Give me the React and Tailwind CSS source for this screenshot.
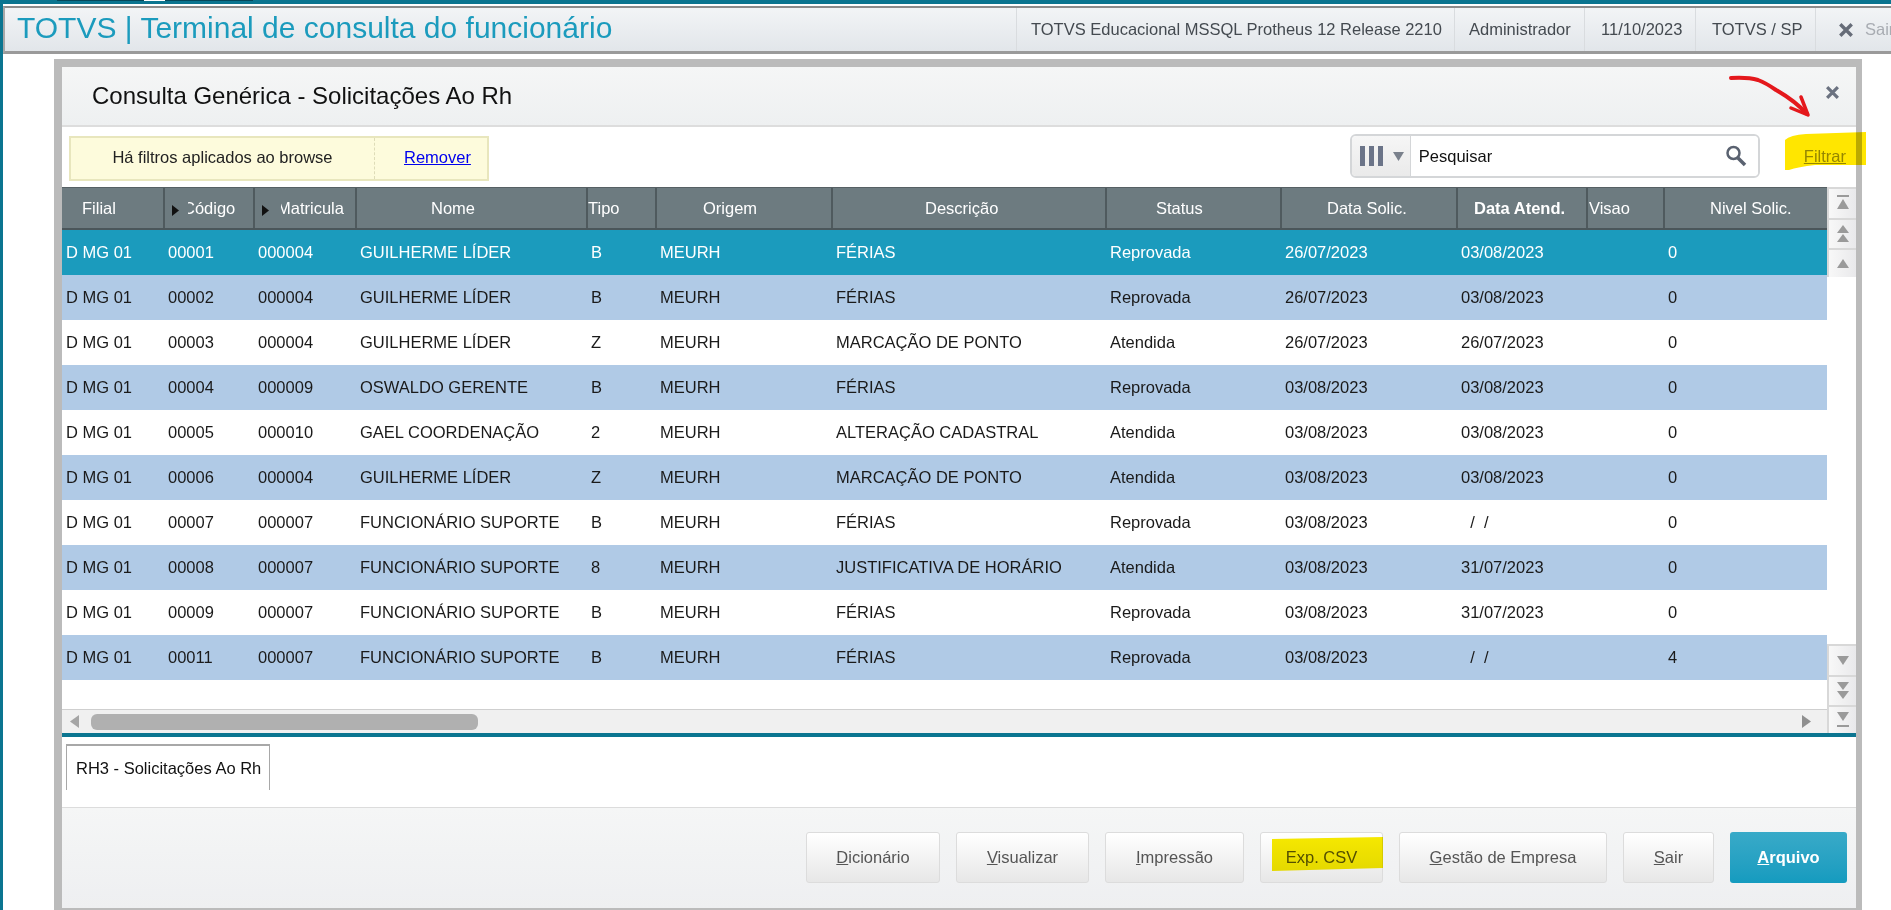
import React from 'react';

const gridCols = 'grid grid-cols-[101px_90px_102px_231px_69px_176px_274px_175px_176px_130px_77px_164px]';

const columns = [
  { label: 'Filial', cls: 'pl-[20px]' },
  { label: 'Código', cls: 'pl-[18px]', marker: 'w-[23px]' },
  { label: 'Matricula', cls: 'pl-[22px]', marker: 'w-[26px]' },
  { label: 'Nome', cls: 'pl-[74px]' },
  { label: 'Tipo', cls: 'pl-0' },
  { label: 'Origem', cls: 'pl-[46px]' },
  { label: 'Descrição', cls: 'pl-[92px]' },
  { label: 'Status', cls: 'pl-[49px]' },
  { label: 'Data Solic.', cls: 'pl-[45px]' },
  { label: 'Data Atend.', cls: 'pl-[16px] font-bold' },
  { label: 'Visao', cls: 'pl-[1px]' },
  { label: 'Nivel Solic.', cls: 'pl-[45px]' },
];

const GL = 'GUILHERME LÍDER';
const FS = 'FUNCIONÁRIO SUPORTE';
const rows = [
  ['00001', '000004', GL, 'B', 'FÉRIAS', 'Reprovada', '26/07/2023', '03/08/2023', '0'],
  ['00002', '000004', GL, 'B', 'FÉRIAS', 'Reprovada', '26/07/2023', '03/08/2023', '0'],
  ['00003', '000004', GL, 'Z', 'MARCAÇÃO DE PONTO', 'Atendida', '26/07/2023', '26/07/2023', '0'],
  ['00004', '000009', 'OSWALDO GERENTE', 'B', 'FÉRIAS', 'Reprovada', '03/08/2023', '03/08/2023', '0'],
  ['00005', '000010', 'GAEL COORDENAÇÃO', '2', 'ALTERAÇÃO CADASTRAL', 'Atendida', '03/08/2023', '03/08/2023', '0'],
  ['00006', '000004', GL, 'Z', 'MARCAÇÃO DE PONTO', 'Atendida', '03/08/2023', '03/08/2023', '0'],
  ['00007', '000007', FS, 'B', 'FÉRIAS', 'Reprovada', '03/08/2023', '  /  /', '0'],
  ['00008', '000007', FS, '8', 'JUSTIFICATIVA DE HORÁRIO', 'Atendida', '03/08/2023', '31/07/2023', '0'],
  ['00009', '000007', FS, 'B', 'FÉRIAS', 'Reprovada', '03/08/2023', '31/07/2023', '0'],
  ['00011', '000007', FS, 'B', 'FÉRIAS', 'Reprovada', '03/08/2023', '  /  /', '4'],
];

const buttons = [
  { key: 'D', rest: 'icionário', w: 'w-[134px]' },
  { key: 'V', rest: 'isualizar', w: 'w-[133px]' },
  { key: 'I', rest: 'mpressão', w: 'w-[139px]' },
  { key: '', rest: 'Exp. CSV', w: 'w-[123px]' },
  { key: 'G', rest: 'estão de Empresa', w: 'w-[208px]' },
  { key: 'S', rest: 'air', w: 'w-[91px]' },
];

function CloseIcon({ className }) {
  return (
    <svg viewBox="0 0 14 14" className={className}>
      <path d="M2 2 L12 12 M12 2 L2 12" stroke="currentColor" strokeWidth="3" fill="none" />
    </svg>
  );
}

// setas da barra de rolagem vertical
function ScrollGlyph({ type }) {
  return (
    <svg width="18" height="22" viewBox="0 0 18 22" fill="#9a9a9a">
      {type === 'first' && <><rect x="3" y="2" width="12" height="2" /><path d="M9 6 L15 16 H3 Z" /></>}
      {type === 'pageUp' && <><path d="M9 2 L15 10 H3 Z" /><path d="M9 11 L15 19 H3 Z" /></>}
      {type === 'up' && <path d="M9 6 L15 15 H3 Z" />}
      {type === 'down' && <path d="M3 6 H15 L9 15 Z" />}
      {type === 'pageDown' && <><path d="M3 2 H15 L9 10 Z" /><path d="M3 11 H15 L9 19 Z" /></>}
      {type === 'last' && <><path d="M3 3 H15 L9 12 Z" /><rect x="3" y="16" width="12" height="2" /></>}
    </svg>
  );
}

function ScrollButton({ type, h }) {
  return (
    <div className={`${h} flex items-center justify-center border-t-2 border-l-2 border-[#d8d8d8] bg-gradient-to-r from-[#f8f8f8] to-[#e9e9eb]`}>
      <ScrollGlyph type={type} />
    </div>
  );
}

function TopBar() {
  return (
    <div className="h-[48px] ml-0 flex items-center justify-between border-t-2 border-l-2 border-b-[3px] border-t-[#8c8c8c] border-l-[#a8a8a8] border-b-[#9a9a9a] bg-gradient-to-b from-[#f2f4f6] to-[#e2e6ea] overflow-hidden">
      <div className="pl-[12px] pb-[4px] text-[#1b9bbd] text-[30px] whitespace-nowrap">TOTVS | Terminal de consulta do funcionário</div>
      <div className="flex items-center h-full text-[16.5px] text-[#444a50] whitespace-nowrap">
        <div className="w-[438px] pl-[14px] h-full flex items-center border-l border-[#d9dcdf]">TOTVS Educacional MSSQL Protheus 12 Release 2210</div>
        <div className="w-[130px] pl-[14px] h-full flex items-center border-l border-[#d9dcdf]">Administrador</div>
        <div className="w-[111px] pl-[16px] h-full flex items-center border-l border-[#d9dcdf]">11/10/2023</div>
        <div className="w-[120px] pl-[16px] h-full flex items-center border-l border-[#d9dcdf]">TOTVS / SP</div>
        <div className="w-[76px] pl-[22px] h-full flex items-center gap-[11px] border-l border-[#d9dcdf] overflow-hidden">
          <CloseIcon className="w-[16px] h-[16px] shrink-0 text-[#666c78]" />
          <span className="text-[#a8acb2]">Sair</span>
        </div>
      </div>
    </div>
  );
}

function Toolbar() {
  return (
    <div className="h-[60px] flex items-start justify-between bg-white">
      <div className="mt-[9px] ml-[7px] w-[420px] h-[45px] flex items-center bg-[#fdfbdc] border-2 border-[#e8e6bd] text-[16.5px] text-[#222]">
        <div className="w-[304px] h-full flex items-center justify-center border-r border-dashed border-[#dedcb8] pb-[3px]">Há filtros aplicados ao browse</div>
        <a className="ml-[29px] mb-[3px] text-[#0000ee] underline">Remover</a>
      </div>
      <div className="flex items-start">
        <div className="mt-[7px] w-[410px] h-[44px] flex border-2 border-[#d4d6d8] rounded-[6px] overflow-hidden">
          <div className="w-[59px] flex items-center gap-[9px] pl-[8px] bg-gradient-to-b from-[#f6f6f6] to-[#eaeaea] border-r border-[#d4d6d8]">
            <svg width="24" height="20" viewBox="0 0 24 20" fill="#6b7488">
              <rect x="0" y="0" width="5" height="20" />
              <rect x="9" y="0" width="5" height="20" />
              <rect x="18" y="0" width="5" height="20" />
            </svg>
            <svg width="11" height="9" viewBox="0 0 11 9" fill="#7a818c"><path d="M0 0 H11 L5.5 9 Z" /></svg>
          </div>
          <div className="flex-1 flex items-center justify-between pl-[8px] pr-[11px] bg-white text-[16.5px] text-[#111]">
            <span>Pesquisar</span>
            <svg width="22" height="22" viewBox="0 0 22 22" fill="none" stroke="#5a6270">
              <circle cx="8.5" cy="8" r="6" strokeWidth="2.5" />
              <path d="M13 13 L20 20" strokeWidth="3.5" />
            </svg>
          </div>
        </div>
        <a className="mt-[17px] ml-[44px] mr-[10px] text-[16.5px] text-[#959595] underline">Filtrar</a>
      </div>
    </div>
  );
}

function Grid() {
  return (
    <div className="w-[1765px] h-[546px] flex flex-col">
      {/* Cabeçalho */}
      <div className={`${gridCols} h-[43px] bg-[#6d7b80] border-t border-[#566064] border-b-2 border-b-[#4b565a] text-[16.5px] text-white shrink-0`}>
        {columns.map(col => (
          <div key={col.label} className={`relative flex items-center border-l-[2px] border-[#4f5a5e] first:border-l-0 whitespace-nowrap overflow-hidden ${col.cls}`}>
            {col.label}
            {col.marker && (
              <span className={`absolute left-0 top-0 h-full ${col.marker} bg-[#6d7b80] flex items-center pl-[7px] pt-[4px]`}>
                <svg width="7" height="11" viewBox="0 0 7 11" fill="#111"><path d="M0 0 L7 5.5 L0 11 Z" /></svg>
              </span>
            )}
          </div>
        ))}
      </div>

      {/* Linhas */}
      {rows.map((row, idx) => {
        const bg = idx === 0 ? 'bg-[#1b9bbd] text-white' : idx % 2 === 1 ? 'bg-[#b0cae6] text-[#1a1a1a]' : 'bg-white text-[#1a1a1a]';
        return (
          <div key={row[0]} className={`${gridCols} h-[45px] shrink-0 items-center text-[16.5px] whitespace-pre ${bg}`}>
            <div className="pl-[4px]">D MG 01</div>
            <div className="pl-[5px]">{row[0]}</div>
            <div className="pl-[5px]">{row[1]}</div>
            <div className="pl-[5px]">{row[2]}</div>
            <div className="pl-[5px]">{row[3]}</div>
            <div className="pl-[5px]">MEURH</div>
            <div className="pl-[5px]">{row[4]}</div>
            <div className="pl-[5px]">{row[5]}</div>
            <div className="pl-[5px]">{row[6]}</div>
            <div className="pl-[5px]">{row[7]}</div>
            <div></div>
            <div className="pl-[5px]">{row[8]}</div>
          </div>
        );
      })}

      <div className="flex-1 bg-white"></div>

      {/* Barra de rolagem horizontal */}
      <div className="h-[24px] shrink-0 flex items-center bg-[#f0f0f0] border-t border-[#cfcfcf] pl-[8px] pr-[16px] justify-between">
        <div className="flex items-center">
          <svg width="9" height="13" viewBox="0 0 9 13" fill="#a5a5a5"><path d="M9 0 V13 L0 6.5 Z" /></svg>
          <div className="ml-[12px] w-[387px] h-[16px] rounded-[6px] bg-[#b0b0b0]"></div>
        </div>
        <svg width="9" height="13" viewBox="0 0 9 13" fill="#8f8f8f"><path d="M0 0 V13 L9 6.5 Z" /></svg>
      </div>
    </div>
  );
}

function Annotations() {
  return (
    <svg className="absolute left-0 top-0 pointer-events-none" width="1891" height="910" viewBox="0 0 1891 910">
      <g style={{ mixBlendMode: 'multiply' }}>
        <path d="M1785 140 Q1790 135 1806 134 L1866 132 V165 H1815 Q1798 167 1789 170 H1785 Z" fill="#ffe600" />
        <path d="M1272 839 L1383 837 V868 L1272 871 Z" fill="#f7ea00" />
      </g>
      <path d="M1731 78 Q1748 77 1758 80 Q1766 83 1776 90 Q1794 100 1807 114" fill="none" stroke="#e4181c" strokeWidth="4" strokeLinecap="round" />
      <path d="M1791 108 L1808 115 L1801 97" fill="none" stroke="#e4181c" strokeWidth="3.5" strokeLinecap="round" strokeLinejoin="round" />
    </svg>
  );
}

export default function App() {
  return (
    <div className="relative w-[1891px] h-[910px] overflow-hidden bg-white font-['Liberation_Sans',Arial,sans-serif] flex flex-col">
      {/* Faixa superior */}
      <div className="h-[4px] shrink-0 bg-[#0b7590] flex items-start">
        <div className="ml-[57px] w-[87px] h-[1px] bg-[#06485a]"></div>
        <div className="w-[21px] h-[1px] bg-white"></div>
        <div className="w-[88px] h-[1px] bg-[#06485a]"></div>
      </div>
      <div className="flex-1 flex min-h-0">
        <div className="w-[3px] shrink-0 bg-[#0b7590]"></div>
        <div className="flex-1 min-w-0 flex flex-col">
          <div className="pt-[2px]">
            <TopBar />
          </div>

          {/* Janela */}
          <div className="mt-[5px] ml-[51px] mr-[29px] flex-1 min-h-0 flex flex-col border-t-[8px] border-l-[8px] border-r-[6px] border-b-[2px] border-[#bbbbbb] bg-white">
            <div className="h-[60px] shrink-0 flex items-center justify-between border-b-2 border-[#dddddd] bg-gradient-to-b from-[#f5f6f6] to-[#eef0f1] pl-[30px] pr-[16px]">
              <div className="text-[24px] text-[#111]">Consulta Genérica - Solicitações Ao Rh</div>
              <CloseIcon className="w-[15px] h-[15px] -mt-[8px] text-[#6b7280]" />
            </div>

            <Toolbar />

            <div className="h-[546px] shrink-0 flex">
              <Grid />
              <div className="flex-1 flex flex-col justify-between">
                <div>
                  <ScrollButton type="first" h="h-[31px]" />
                  <ScrollButton type="pageUp" h="h-[30px]" />
                  <ScrollButton type="up" h="h-[29px]" />
                </div>
                <div>
                  <ScrollButton type="down" h="h-[31px]" />
                  <ScrollButton type="pageDown" h="h-[30px]" />
                  <ScrollButton type="last" h="h-[28px]" />
                </div>
              </div>
            </div>

            <div className="h-[4px] shrink-0 bg-[#0b7590]"></div>

            {/* Abas */}
            <div className="h-[71px] shrink-0 pt-[7px] pl-[4px] border-b border-[#dcdcdc]">
              <div className="w-[204px] h-[46px] flex items-center pl-[9px] border-t-2 border-l border-r border-[#a8a8a8] text-[16.5px] text-[#111] whitespace-nowrap">
                RH3 - Solicitações Ao Rh
              </div>
            </div>

            {/* Rodapé */}
            <div className="flex-1 flex items-start justify-end gap-4 pt-[24px] pr-[9px] bg-gradient-to-b from-[#f5f6f6] to-[#eeeff1]">
              {buttons.map(btn => (
                <button key={btn.rest} className={`${btn.w} h-[51px] rounded-[3px] border border-[#dcdcdc] bg-gradient-to-b from-white to-[#e7e7e7] text-[16.5px] text-[#555]`}>
                  <span className="underline">{btn.key}</span>{btn.rest}
                </button>
              ))}
              <button className="w-[117px] h-[51px] rounded-[3px] bg-gradient-to-b from-[#38aac8] to-[#149bbf] text-[16.5px] font-bold text-white">
                <span className="underline">A</span>rquivo
              </button>
            </div>
          </div>
        </div>
      </div>
      <Annotations />
    </div>
  );
}
